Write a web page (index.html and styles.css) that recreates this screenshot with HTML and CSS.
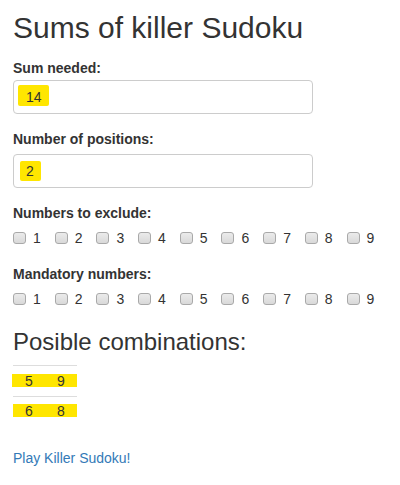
FILE: index.html
```html
<!DOCTYPE html>
<html>
<head>
<meta charset="utf-8">
<title>Sums of killer Sudoku</title>
<link rel="stylesheet" href="styles.css">
</head>
<body>
<div class="page">
  <h1 class="title">Sums of killer Sudoku</h1>

  <label class="field-label label-first">Sum needed:</label>
  <div class="form-control"><span class="hl hl-14">14</span></div>

  <label class="field-label label-second">Number of positions:</label>
  <div class="form-control"><span class="hl hl-2">2</span></div>

  <label class="field-label label-exclude">Numbers to exclude:</label>
  <div class="check-row">
    <label class="check"><input type="checkbox">1</label>
    <label class="check"><input type="checkbox">2</label>
    <label class="check"><input type="checkbox">3</label>
    <label class="check"><input type="checkbox">4</label>
    <label class="check"><input type="checkbox">5</label>
    <label class="check"><input type="checkbox">6</label>
    <label class="check"><input type="checkbox">7</label>
    <label class="check"><input type="checkbox">8</label>
    <label class="check"><input type="checkbox">9</label>
  </div>

  <label class="field-label label-mandatory">Mandatory numbers:</label>
  <div class="check-row">
    <label class="check"><input type="checkbox">1</label>
    <label class="check"><input type="checkbox">2</label>
    <label class="check"><input type="checkbox">3</label>
    <label class="check"><input type="checkbox">4</label>
    <label class="check"><input type="checkbox">5</label>
    <label class="check"><input type="checkbox">6</label>
    <label class="check"><input type="checkbox">7</label>
    <label class="check"><input type="checkbox">8</label>
    <label class="check"><input type="checkbox">9</label>
  </div>

  <h3 class="subtitle">Posible combinations:</h3>
  <div class="combos">
    <div class="combo"><span class="hl hl-row hl-row1"><span class="cell">5</span><span class="cell">9</span></span></div>
    <div class="combo"><span class="hl hl-row hl-row2"><span class="cell">6</span><span class="cell">8</span></span></div>
  </div>

  <a class="play-link" href="#">Play Killer Sudoku!</a>
</div>
</body>
</html>
```

FILE: styles.css
```css
html, body {
  margin: 0;
  padding: 0;
  background: #ffffff;
}

body {
  font-family: "Liberation Sans", Arial, sans-serif;
  color: #333333;
  font-size: 14px;
  line-height: 20px;
}

.page {
  padding: 11px 13px 0 13px;
  display: flex;
  flex-direction: column;
  align-items: flex-start;
}

.title {
  margin: 0;
  font-size: 30px;
  line-height: 33px;
  font-weight: 400;
}

.field-label {
  display: block;
  font-size: 14px;
  font-weight: 700;
  line-height: 20px;
}

.label-first { margin-top: 14px; margin-bottom: 2px; }
.label-second { margin-top: 15px; margin-bottom: 5px; }
.label-exclude { margin-top: 15px; margin-bottom: 5px; }
.label-mandatory { margin-top: 16px; margin-bottom: 5px; }

.form-control {
  box-sizing: border-box;
  width: 300px;
  height: 34px;
  border: 1px solid #cccccc;
  border-radius: 4px;
  background: #ffffff;
  display: flex;
  align-items: flex-start;
  font-size: 14px;
  color: #333333;
}

.hl {
  background: #ffe600;
}

.hl-14 {
  margin: 4px 0 0 4px;
  padding: 4px 7px 1px 8px;
  line-height: 16px;
  border-radius: 2px;
}

.hl-2 {
  margin: 6px 0 0 6px;
  padding: 0 7px 0 6px;
  line-height: 20px;
  border-radius: 2px;
}

.check-row {
  display: flex;
  gap: 13.9px;
  height: 20px;
}

.check {
  display: flex;
  align-items: flex-start;
  font-size: 14px;
  line-height: 20px;
}

.check input {
  -webkit-appearance: none;
  appearance: none;
  box-sizing: border-box;
  width: 13px;
  height: 12px;
  margin: 4px 7px 0 0;
  border: 1px solid #a9a9a9;
  border-radius: 3px;
  background: linear-gradient(#ebebeb, #d9d9d9);
}

.subtitle {
  margin: 19px 0 0 0;
  font-size: 24px;
  line-height: 27px;
  font-weight: 400;
}

.combos {
  margin-top: 10px;
  width: 64px;
}

.combo {
  border-top: 1px solid #dddddd;
  height: 30px;
  display: flex;
  align-items: flex-start;
}

.hl-row {
  display: flex;
  box-sizing: border-box;
  height: 13px;
  padding-top: 1px;
}

.hl-row1 {
  width: 65px;
  margin: 8px 0 0 -1px;
  padding-left: 1px;
}

.hl-row2 {
  width: 64px;
  margin-top: 7px;
}

.cell {
  width: 32px;
  text-align: center;
  font-size: 14px;
  line-height: 12px;
}

.play-link {
  margin-top: 21px;
  font-size: 14px;
  line-height: 20px;
  color: #337ab7;
  text-decoration: none;
}
```
